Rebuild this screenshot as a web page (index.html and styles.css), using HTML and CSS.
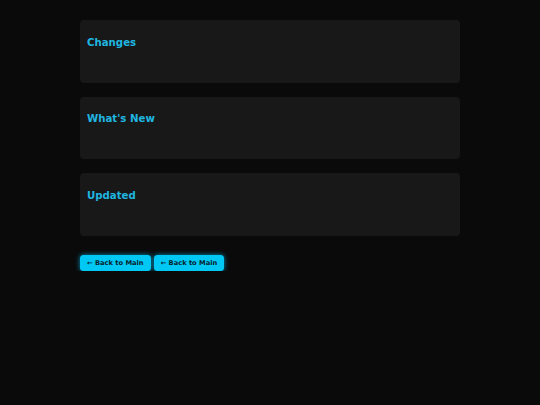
FILE: index.html
```html
<!DOCTYPE html>
<html>
<head>
<meta charset="utf-8">
<link rel="stylesheet" href="styles.css">
</head>
<body>
<div class="wrap">
  <section class="card"><h3 class="title">Changes</h3></section>
  <section class="card"><h3 class="title">What's New</h3></section>
  <section class="card"><h3 class="title">Updated</h3></section>
  <div class="actions">
    <a class="btn">← Back to Main</a>
    <a class="btn">← Back to Main</a>
  </div>
</div>
</body>
</html>
```
FILE: styles.css
```css
html, body {
  margin: 0;
  padding: 0;
  background: #0a0a0a;
  font-family: "DejaVu Sans", sans-serif;
}
.wrap {
  width: 380px;
  margin: 0 auto;
  padding-top: 20px;
  display: flex;
  flex-direction: column;
  gap: 14px;
}
.card {
  background: #181818;
  border-radius: 4px;
  height: 62.5px;
  box-sizing: border-box;
  padding: 16.5px 7px 0;
}
.title {
  margin: 0;
  color: #1fb6e0;
  font-size: 10.2px;
  font-weight: bold;
  line-height: 12px;
}
.actions {
  display: flex;
  gap: 3px;
  margin-top: 5.5px;
}
.btn {
  display: inline-block;
  background: #00c8f5;
  color: #06222c;
  font-size: 6.7px;
  font-weight: bold;
  line-height: 16px;
  height: 16px;
  padding: 0 7px;
  border-radius: 3.5px;
  box-shadow: 0 0 5px rgba(0, 200, 255, 0.7);
}
```
